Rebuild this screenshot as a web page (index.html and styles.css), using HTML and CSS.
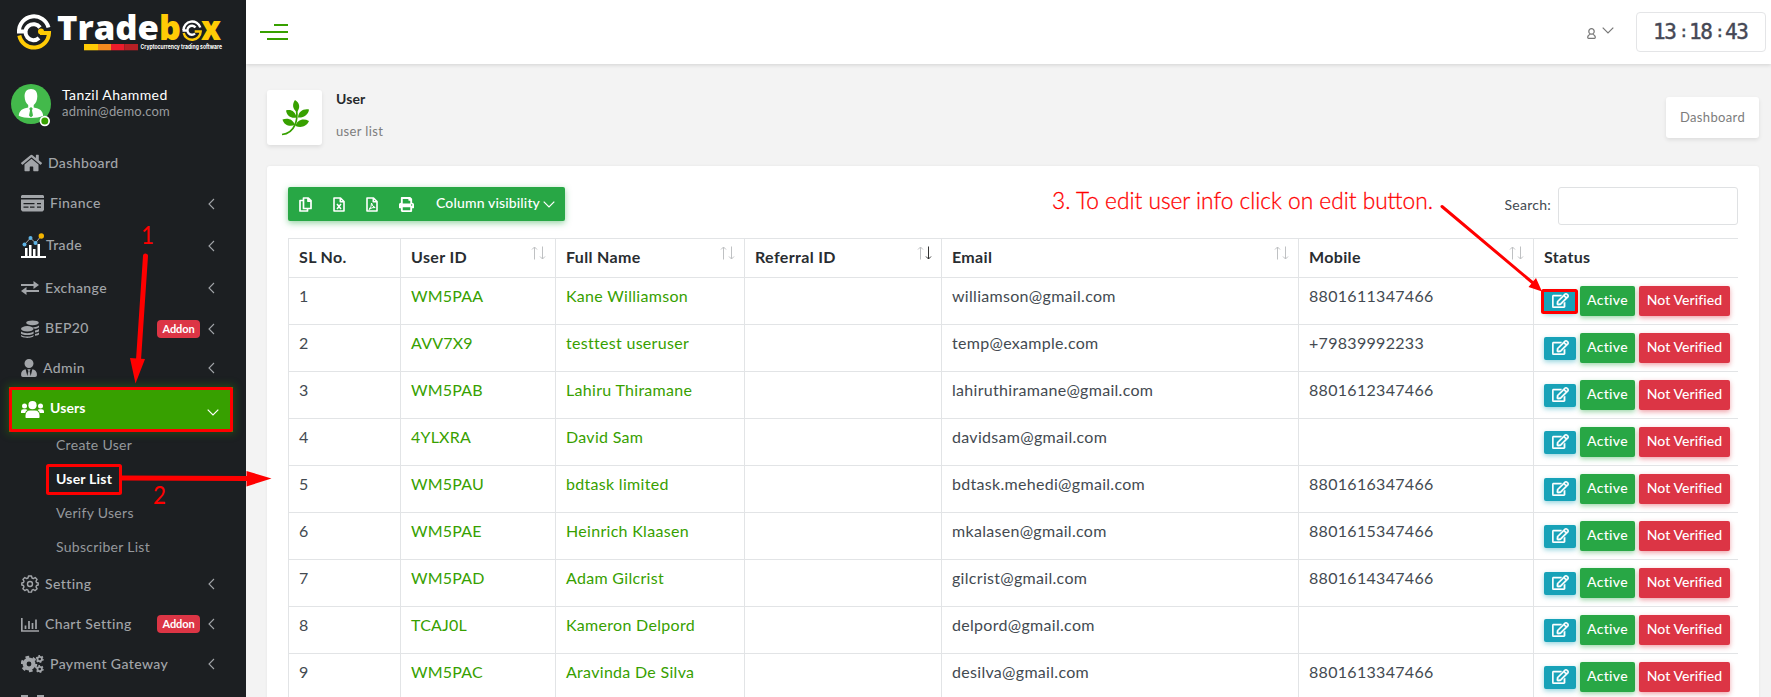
FILE: index.html
```html
<!DOCTYPE html>
<html lang="en">
<head>
<meta charset="utf-8">
<title>User list</title>
<link rel="stylesheet" href="styles.css">
</head>
<body>
<svg class="defs" width="0" height="0">
  <symbol id="edit" viewBox="0 0 576 512"><path fill="currentColor" stroke="currentColor" stroke-width="14" d="M402.3 344.9l32-32c5-5 13.7-1.5 13.7 5.7V464c0 26.5-21.5 48-48 48H48c-26.5 0-48-21.5-48-48V112c0-26.5 21.5-48 48-48h273.5c7.1 0 10.7 8.6 5.7 13.7l-32 32c-1.5 1.5-3.5 2.3-5.7 2.3H48v352h352V350.5c0-2.1.8-4.1 2.3-5.6zm156.6-201.8L296.3 405.7l-90.4 10c-26.2 2.9-48.5-19.2-45.6-45.6l10-90.4L432.9 17.1c22.9-22.9 59.9-22.9 82.7 0l43.2 43.2c22.9 22.9 22.9 60 .1 82.8zM460.1 174L402 115.9 216.2 301.8l-7.3 65.3 65.3-7.3L460.1 174zm64.8-79.7l-43.2-43.2c-4.1-4.1-10.8-4.1-14.8 0L436 82l58.1 58.1 30.9-30.9c4-4.2 4-10.8-.1-14.9z"/></symbol>
  <symbol id="left" viewBox="0 0 7 12"><path d="M6 1 1 6l5 5" fill="none" stroke="currentColor" stroke-width="1.1"/></symbol>
  <symbol id="down" viewBox="0 0 12 7"><path d="M.7.7 6 6 11.300.7" fill="none" stroke="currentColor" stroke-width="1.2"/></symbol>
  <symbol id="up-arrow" viewBox="0 0 7 14"><path d="M3.500 1v12.500M1 3.500l2.500-2.500 2.500 2.500" fill="none" stroke="currentColor"/></symbol>
  <symbol id="down-arrow" viewBox="0 0 7 14"><path d="M3.500.5v12.500M1 10.500l2.500 2.500 2.500-2.500" fill="none" stroke="currentColor"/></symbol>
</svg>

<div class="app">
  <aside class="sidebar">
    <svg class="logo" width="246" height="64" viewBox="0 0 246 64">
      <g fill="none" stroke-width="4">
        <path d="M19 31.500a15 15 0 0 1 29.500-4" stroke="#fff"/>
        <path d="M19.300 35.500a15 15 0 0 0 29.700-2.500h-9" stroke="#ffcb05"/>
        <path d="M40 27.500a8 8 0 1 0-1 10.500M17 31.500h8" stroke="#fff"/>
      </g>
      <circle cx="41" cy="31.500" r="3" fill="#ffcb05"/>
      <text class="brand" x="57" y="40" textLength="102" lengthAdjust="spacingAndGlyphs" fill="#fff">Trade</text>
      <text class="brand" x="159" y="40" textLength="22" lengthAdjust="spacingAndGlyphs" fill="#ffcb05">b</text>
      <text class="brand" x="201" y="40" textLength="20" lengthAdjust="spacingAndGlyphs" fill="#ffcb05">x</text>
      <g fill="none" stroke-width="2.400">
        <path d="M183.500 30a8.600 8.600 0 0 1 16.800-2.500" stroke="#fff"/>
        <path d="M183.700 33a8.600 8.600 0 0 0 17-1.500h-6" stroke="#ffcb05"/>
        <path d="M195.500 27.500a4.500 4.500 0 1 0-.5 6M182.500 30.500h5" stroke="#fff"/>
      </g>
      <path fill="#ffcb05" d="M84 44h14v6.300H84z"/><path fill="#f58b1f" d="M98 44h13v6.300H98z"/><path fill="#ec1c2b" d="M111 44h13.500v6.300H111z"/><path fill="#b92025" d="M124.500 44h13.500v6.300h-13.500z"/>
      <text class="tagline" x="140.500" y="49" textLength="81.500" lengthAdjust="spacingAndGlyphs">Cryptocurrency trading software</text>
    </svg>

    <div class="profile">
      <svg width="42" height="44" viewBox="0 0 42 44">
        <circle cx="20" cy="20" r="20" fill="#43b94b"/>
        <path fill="#fff" d="M20 5c4.500 0 6.500 3 6.300 7.500-.1 4-1.500 7-3.600 8.500v2.500c6 1.200 9 3 9.500 8.200-6 3-18.500 3-24.500 0 .5-5.200 3.500-7 9.500-8.200V21c-2-1.500-3.500-4.500-3.600-8.500C13.500 8 15.500 5 20 5z"/>
        <path fill="#43b94b" d="m18.300 24.500 1.700-1.500 1.700 1.500-.7 2 1 5-2 2-2-2 1-5z"/>
        <circle cx="33.800" cy="37" r="5.200" fill="#fff"/><circle cx="33.800" cy="37" r="3.500" fill="#37a000"/>
      </svg>
      <div><div class="name">Tanzil Ahammed</div><div class="mail">admin@demo.com</div></div>
    </div>

    <nav class="menu">
      <a class="item dash"><svg width="21" height="18" viewBox="0 20 576 472"><path fill="currentColor" d="M280.37 148.26L96 300.11V464a16 16 0 0 0 16 16l112.060-.29a16 16 0 0 0 15.920-16V368a16 16 0 0 1 16-16h64a16 16 0 0 1 16 16v95.640a16 16 0 0 0 16 16.050L464 480a16 16 0 0 0 16-16V300L295.670 148.260a12.190 12.190 0 0 0-15.300 0zM571.600 251.470L488 182.560V44.050a12 12 0 0 0-12-12h-56a12 12 0 0 0-12 12v72.610L318.470 43a48 48 0 0 0-61 0L4.340 251.470a12 12 0 0 0-1.600 16.900l25.500 31A12 12 0 0 0 45.150 301l235.220-193.740a12.190 12.190 0 0 1 15.300 0L530.900 301a12 12 0 0 0 16.900-1.600l25.500-31a12 12 0 0 0-1.700-16.930z"/></svg><span>Dashboard</span></a>
      <a class="item fin"><svg width="23" height="17" viewBox="0 0 23 17"><path fill="currentColor" fill-rule="evenodd" d="M1 0h21l1 1v2H0V1zM0 4.500h23V15l-1.500 1.500h-20L0 15zM2.500 8v1.300h11V8zm0 3.500v1.300h5v-1.300zm6.500 0v1.300h4.500v-1.300zm7-3.500v1.300h4V8zm0 3.500v1.300h4v-1.300z"/></svg><span>Finance</span><svg class="chev"><use href="#left"/></svg></a>
      <a class="item trade"><svg width="25" height="25" viewBox="0 0 25 25"><path fill="#fff" d="M0 23h25v2H0zM4 15h2.500v8H4zm4-3h2.500v11H8zm4 4h2.500v7H12zm4.500-5H19v12h-2.500z"/><path d="M3.500 11.500 9.500 5l5 5 5.500-7" fill="none" stroke="#aaa"/><g fill="#5fb4e5"><circle cx="3.500" cy="11.500" r="2"/><circle cx="9.500" cy="5" r="2"/><circle cx="14.500" cy="10" r="2"/></g><circle cx="20.300" cy="3" r="2.700" fill="#f4b400"/></svg><span>Trade</span><svg class="chev"><use href="#left"/></svg></a>
      <a class="item exch"><svg width="18" height="14" viewBox="0 0 18 14"><path fill="currentColor" d="M0 3h12.500V0L18 4l-5.500 4V5H0zM18 9H5.500V6L0 10l5.500 4v-3H18z"/></svg><span>Exchange</span><svg class="chev"><use href="#left"/></svg></a>
      <a class="item bep"><svg width="18" height="18" viewBox="0 0 18 18"><g fill="currentColor"><ellipse cx="11.500" cy="2.800" rx="6.300" ry="2.400"/><path d="M18 5.500c-2 1.700-4 1.700-6 1.600l1.500 1.700c2 0 4-.7 4.500-1.500zM18 9c-1 .8-2.500 1.200-4 1.400v2c2 0 4-.8 4-1.500zM18 12.500c-1 .8-2.500 1.200-4 1.400v1.800c2 0 4-.8 4-1.500z"/><ellipse cx="6.300" cy="8.800" rx="6.300" ry="2.700"/><path d="M0 11.500c3 2.200 9.500 2.200 12.600 0v1.700c0 2.400-12.600 2.400-12.600 0zM0 15c3 2 9.500 2 12.600 0v.8c0 2.800-12.600 2.800-12.600 0z"/></g></svg><span>BEP20</span><b class="badge">Addon</b><svg class="chev"><use href="#left"/></svg></a>
      <a class="item admin"><svg width="16" height="18" viewBox="0 0 448 512"><path fill="currentColor" d="M224 256c70.700 0 128-57.300 128-128S294.700 0 224 0 96 57.300 96 128s57.300 128 128 128zm95.800 32.600L272 480l-32-136 32-56h-96l32 56-32 136-47.800-191.400C56.900 292 0 350.300 0 422.400V464c0 26.500 21.500 48 48 48h352c26.500 0 48-21.500 48-48v-41.600c0-72.100-56.900-130.400-128.200-133.800z"/></svg><span>Admin</span><svg class="chev"><use href="#left"/></svg></a>
      <a class="item users"><svg width="23" height="17" viewBox="0 0 23 17"><g fill="currentColor"><circle cx="3.500" cy="5" r="2.500"/><circle cx="19.500" cy="5" r="2.500"/><circle cx="11.500" cy="4.200" r="4.100"/><path d="M0 12V10.500Q0 8.300 2.300 8.300H5l1.500.7Q4.500 10 4.200 12zM23 12v-1.500q0-2.200-2.300-2.200H18l-1.500.7q2 1 2.300 3zM5 17q-.5-.2-.5-1v-1.500C4.500 11.500 6 9.500 9 9.500h5c3 0 4.500 2 4.500 5V16q0 .8-.5 1z"/></g></svg><span>Users</span><svg class="open"><use href="#down"/></svg></a>
      <div class="submenu"><a>Create User</a><a class="current">User List</a><a>Verify Users</a><a>Subscriber List</a></div>
      <a class="item sett"><svg width="18" height="18" viewBox="0 0 18 18"><g fill="none" stroke="currentColor" stroke-width="1.400"><path stroke-linejoin="round" d="m7.500 1-.5 2-1.400.6-1.800-1.100-1.900 1.900 1.100 1.800L2.500 7.500.8 8v2l1.700.5.5 1.400-1.100 1.800 1.900 1.900 1.800-1.100 1.400.6.500 2h3l.5-2 1.400-.6 1.800 1.100 1.900-1.900-1.100-1.800.5-1.400 1.700-.5V8l-1.700-.5-.5-1.300 1.100-1.800-1.900-1.900-1.800 1.100L11 3l-.5-2z"/><circle cx="9" cy="9" r="2.500"/></g></svg><span>Setting</span><svg class="chev"><use href="#left"/></svg></a>
      <a class="item chart"><svg width="18" height="15" viewBox="0 0 18 15"><path d="M.8 1v13H18M4.500 12V8.500M8 12V4M11.500 12V6M15 12V2.500" fill="none" stroke="currentColor" stroke-width="1.700"/></svg><span>Chart Setting</span><b class="badge">Addon</b><svg class="chev"><use href="#left"/></svg></a>
      <a class="item pay"><svg width="23" height="18" viewBox="0 0 23 18"><g fill="none" stroke="currentColor"><circle cx="8" cy="9" r="4.400" stroke-width="4"/><circle cx="8" cy="9" r="7" stroke-width="2.500" stroke-dasharray="3.660 3.660"/><circle cx="18.700" cy="4" r="2.200" stroke-width="1.800"/><circle cx="18.700" cy="4" r="3.300" stroke-width="1.400" stroke-dasharray="1.700 1.750"/><circle cx="18.700" cy="14" r="2.200" stroke-width="1.800"/><circle cx="18.700" cy="14" r="3.300" stroke-width="1.400" stroke-dasharray="1.700 1.750"/></g></svg><span>Payment Gateway</span><svg class="chev"><use href="#left"/></svg></a>
      <a class="item last"><svg width="23" height="18" viewBox="0 0 23 18"><path fill="currentColor" d="M0 0h7v7H0zM16 0h7v7h-7z"/></svg></a>
    </nav>
  </aside>

  <main class="main">
    <header class="topbar">
      <div class="burger"><i></i><i></i><i></i></div>
      <div class="account">
        <svg width="9" height="11" viewBox="0 0 9 11"><g fill="none" stroke="#777" stroke-width="1.200"><ellipse cx="4.500" cy="3.400" rx="2.700" ry="2.800"/><path d="M3.300 6.200C1 7 .7 8 .7 9.500q0 .8.8.8h6q.8 0 .8-.8c0-1.500-.3-2.500-2.600-3.300"/></g></svg>
        <svg class="caret" width="12" height="7"><use href="#down"/></svg>
      </div>
      <div class="clock"><span>13</span><em>:</em><span>18</span><em>:</em><span>43</span></div>
    </header>

    <section class="heading">
      <div class="leaf"><svg width="28" height="36" viewBox="0 0 28 36"><g fill="#37a000"><path d="M14 0c5 3 5.500 8 2 12-4.500-3-5-8-2-12zM5 10.500c5-1.500 9.500 1 10.500 7-5 1-9.500-1-10.500-7zM28 9.500c-.5 5-5 8.500-11 8 .5-6 5-9 11-8zM1.500 19.500C6.500 17.500 12 19 14 25c-5 2-11 .5-12.500-5.500zM28 21c-2 5-7.500 7.500-13.500 5C16 20 22 18 28 21z"/></g><path d="M15.500 10c1.500 9-1 23-14.500 24.500" fill="none" stroke="#37a000" stroke-width="1.700"/></svg></div>
      <div class="titles"><h1>User</h1><p>user list</p></div>
      <a class="crumb">Dashboard</a>
    </section>

    <section class="card">
      <div class="tools">
        <div class="buttons">
          <svg width="13" height="15" viewBox="0 0 13 15"><path d="M4.500 3.500H1V14h7.500v-2.500M4.500 1h4.800L12 3.700v7.800H4.500zM9 1v3.200h3" fill="none" stroke="currentColor" stroke-width="1.700" stroke-linejoin="round"/></svg>
          <svg width="12" height="15" viewBox="0 0 12 15"><path d="M1 1h6.500L11 4.500V14H1zM7.300 1v3.700H11" fill="none" stroke="currentColor" stroke-width="1.600" stroke-linejoin="round"/><path d="m4 7 4 5M8 7l-4 5" stroke="currentColor" stroke-width="1.500"/></svg>
          <svg width="12" height="15" viewBox="0 0 12 15"><path d="M1 1h6.500L11 4.500V14H1zM7.300 1v3.700H11" fill="none" stroke="currentColor" stroke-width="1.600" stroke-linejoin="round"/><path d="M3 12.500q2.800-3 2.500-6.500 1 4 3.700 4.500-3.200-.5-6.200 2" fill="none" stroke="currentColor"/></svg>
          <svg width="15" height="15" viewBox="0 0 512 512"><path fill="currentColor" d="M448 192V77.250c0-8.490-3.370-16.620-9.370-22.630L393.370 9.370c-6-6-14.140-9.370-22.630-9.370H96C78.330 0 64 14.330 64 32v160c-35.350 0-64 28.650-64 64v112c0 8.840 7.160 16 16 16h48v96c0 17.670 14.330 32 32 32h320c17.670 0 32-14.330 32-32v-96h48c8.840 0 16-7.160 16-16V256c0-35.350-28.650-64-64-64zm-64 256H128v-96h256v96zm0-224H128V64h192v48c0 8.840 7.160 16 16 16h48v96zm48 72c-13.250 0-24-10.750-24-24 0-13.260 10.750-24 24-24s24 10.740 24 24c0 13.250-10.750 24-24 24z"/></svg>
          <span>Column visibility</span>
          <svg class="caret" width="12" height="7"><use href="#down"/></svg>
        </div>
        <label class="search"><span>Search:</span><input type="text"></label>
      </div>

      <div class="scroll">
        <table>
          <colgroup><col class="c1"><col class="c2"><col class="c3"><col class="c4"><col class="c5"><col class="c6"><col class="c7"></colgroup>
          <thead><tr>
            <th>SL No.</th>
            <th><div><span>User ID</span><i class="sort"><svg><use href="#up-arrow"/></svg><svg><use href="#down-arrow"/></svg></i></div></th>
            <th><div><span>Full Name</span><i class="sort"><svg><use href="#up-arrow"/></svg><svg><use href="#down-arrow"/></svg></i></div></th>
            <th><div><span>Referral ID</span><i class="sort desc"><svg><use href="#up-arrow"/></svg><svg><use href="#down-arrow"/></svg></i></div></th>
            <th><div><span>Email</span><i class="sort"><svg><use href="#up-arrow"/></svg><svg><use href="#down-arrow"/></svg></i></div></th>
            <th><div><span>Mobile</span><i class="sort"><svg><use href="#up-arrow"/></svg><svg><use href="#down-arrow"/></svg></i></div></th>
            <th><div><span>Status</span><i class="sort"><svg><use href="#up-arrow"/></svg><svg><use href="#down-arrow"/></svg></i></div></th>
          </tr></thead>
          <tbody>
            <tr><td>1</td><td class="id">WM5PAA</td><td class="full">Kane Williamson</td><td></td><td class="email">williamson@gmail.com</td><td class="phone">8801611347466</td><td><div class="acts"><a class="edit"><svg><use href="#edit"/></svg></a><a class="ok">Active</a><a class="no">Not Verified</a></div></td></tr>
            <tr><td>2</td><td class="id">AVV7X9</td><td class="full">testtest useruser</td><td></td><td class="email">temp@example.com</td><td class="phone">+79839992233</td><td><div class="acts"><a class="edit"><svg><use href="#edit"/></svg></a><a class="ok">Active</a><a class="no">Not Verified</a></div></td></tr>
            <tr><td>3</td><td class="id">WM5PAB</td><td class="full">Lahiru Thiramane</td><td></td><td class="email">lahiruthiramane@gmail.com</td><td class="phone">8801612347466</td><td><div class="acts"><a class="edit"><svg><use href="#edit"/></svg></a><a class="ok">Active</a><a class="no">Not Verified</a></div></td></tr>
            <tr><td>4</td><td class="id">4YLXRA</td><td class="full">David Sam</td><td></td><td class="email">davidsam@gmail.com</td><td class="phone"></td><td><div class="acts"><a class="edit"><svg><use href="#edit"/></svg></a><a class="ok">Active</a><a class="no">Not Verified</a></div></td></tr>
            <tr><td>5</td><td class="id">WM5PAU</td><td class="full">bdtask limited</td><td></td><td class="email">bdtask.mehedi@gmail.com</td><td class="phone">8801616347466</td><td><div class="acts"><a class="edit"><svg><use href="#edit"/></svg></a><a class="ok">Active</a><a class="no">Not Verified</a></div></td></tr>
            <tr><td>6</td><td class="id">WM5PAE</td><td class="full">Heinrich Klaasen</td><td></td><td class="email">mkalasen@gmail.com</td><td class="phone">8801615347466</td><td><div class="acts"><a class="edit"><svg><use href="#edit"/></svg></a><a class="ok">Active</a><a class="no">Not Verified</a></div></td></tr>
            <tr><td>7</td><td class="id">WM5PAD</td><td class="full">Adam Gilcrist</td><td></td><td class="email">gilcrist@gmail.com</td><td class="phone">8801614347466</td><td><div class="acts"><a class="edit"><svg><use href="#edit"/></svg></a><a class="ok">Active</a><a class="no">Not Verified</a></div></td></tr>
            <tr><td>8</td><td class="id">TCAJ0L</td><td class="full">Kameron Delpord</td><td></td><td class="email">delpord@gmail.com</td><td class="phone"></td><td><div class="acts"><a class="edit"><svg><use href="#edit"/></svg></a><a class="ok">Active</a><a class="no">Not Verified</a></div></td></tr>
            <tr><td>9</td><td class="id">WM5PAC</td><td class="full">Aravinda De Silva</td><td></td><td class="email">desilva@gmail.com</td><td class="phone">8801613347466</td><td><div class="acts"><a class="edit"><svg><use href="#edit"/></svg></a><a class="ok">Active</a><a class="no">Not Verified</a></div></td></tr>
          </tbody>
        </table>
      </div>
    </section>
  </main>
</div>

<svg class="notes" width="1771" height="697" viewBox="0 0 1771 697">
  <g fill="none" stroke="#f00">
    <rect x="10.500" y="388.500" width="221" height="42" rx="1" stroke-width="3"/>
    <rect x="47.500" y="465.500" width="73" height="28" rx="1" stroke-width="3"/>
    <rect x="1542.500" y="290.500" width="34" height="22" rx="1" stroke-width="3"/>
    <path d="M145.500 256 138.500 360M122 478l125 .5" stroke-width="5" stroke-linecap="round"/>
    <path d="M1442 206.500 1533 283" stroke-width="3" stroke-linecap="round"/>
  </g>
  <path fill="#f00" d="m130 358 15 1-9.500 24.500zM246.500 471l25 7.500-25 8zM1536 278l6 13.500-13.500-4.500z"/>
  <text x="141" y="244" font-size="25" textLength="13" lengthAdjust="spacingAndGlyphs">1</text>
  <text x="153" y="504" font-size="25" textLength="13" lengthAdjust="spacingAndGlyphs">2</text>
  <text class="light" x="1052" y="208.500" font-size="23.500" textLength="381" lengthAdjust="spacingAndGlyphs">3. To edit user info click on edit button.</text>
</svg>
</body>
</html>
```
FILE: styles.css
```css
* { box-sizing: border-box; }
body { margin: 0; width: 1771px; height: 697px; overflow: hidden; background: #f3f3f3; color: #434a51; font: 16px/24px Lato, "Noto Sans", sans-serif; position: relative; }
svg { display: block; flex: none; }
.defs { position: absolute; }
.app { display: flex; height: 697px; }

.sidebar { width: 246px; flex: none; height: 697px; overflow: hidden; background: #1c1f22; color: #a2a5a9; }
.brand { font: 800 34px "Open Sans", sans-serif; }
.tagline { font: 700 6px Inter, sans-serif; fill: #fff; }
.profile { display: flex; gap: 9px; padding: 20px 0 0 11px; height: 79px; }
.profile svg { width: 42px; }
.profile > div { padding-top: 3px; line-height: 16px; font-size: 14px; }
.name { color: #fff; letter-spacing: .4px; }
.mail { font-size: 13px; letter-spacing: .2px; color: #999c9f; line-height: 17px; }
.menu { display: flex; flex-direction: column; font-size: 14px; }
.item { display: flex; align-items: center; height: 40px; padding-left: 21px; letter-spacing: .4px; flex: none; font-weight: 500; }
.item span { margin-left: 6px; line-height: 20px; padding-bottom: 1px; }
.item .chev { width: 7px; height: 12px; margin: 0 31px 0 auto; }
.item .badge + .chev { margin-left: 8px; }
.badge { margin-left: auto; width: 43px; height: 18px; border-radius: 4px; background: #dc3545; color: #fff; font: 700 11px/17px Lato, sans-serif; text-align: center; letter-spacing: -.1px; }
.fin { height: 41px; }
.trade { height: 43px; }
.trade span { margin-left: 0; }
.exch { height: 42px; }
.bep { height: 39px; }
.item.users { height: 45px; margin: -1px 13px 0 9px; padding-left: 12px; background: #37a000; color: #fff; box-shadow: 0 0 8px 2px rgba(55,160,0,.3); font-weight: 700; letter-spacing: .1px; }
.item.users .open { width: 12px; height: 7px; margin: 5px 14px 0 auto; }
.users span { padding-bottom: 3px; }
.submenu { display: flex; flex-direction: column; padding-left: 56px; margin-top: -4px; }
.submenu a { height: 34px; line-height: 33px; letter-spacing: .3px; color: #95989c; flex: none; }
.submenu .current { color: #fff; font-weight: 700; letter-spacing: .2px; }

.main { flex: 1; min-width: 0; }
.topbar { height: 64px; background: #fff; display: flex; align-items: center; padding: 0 5px 0 14px; box-shadow: 0 1px 4px rgba(0,0,0,.14); }
.burger { display: flex; flex-direction: column; align-items: flex-end; gap: 5px; width: 28px; }
.burger i { height: 2px; width: 28px; background: #37a000; }
.burger i:first-child { width: 14px; }
.burger i:last-child { width: 21px; }
.account { margin-left: auto; display: flex; gap: 6px; color: #777; padding-top: 3px; }
.account .caret { margin-top: -1px; }
.clock { margin-left: 22px; width: 130px; height: 40px; border: 1px solid #e4e5e7; border-radius: 4px; display: flex; align-items: center; justify-content: center; gap: 4px; color: #464855; font: 400 21px/36px "DejaVu Sans Mono", monospace; -webkit-text-stroke: .4px #464855; }
.clock span { width: 24px; letter-spacing: -1.300px; }
.clock em { width: 6px; font-style: normal; font-size: 16px; margin-left: -2px; }

.heading { display: flex; padding: 26px 12px 0 21px; height: 102px; font-size: 14px; }
.leaf { width: 55px; height: 55px; border-radius: 3px; background: #fff; display: grid; place-items: center; box-shadow: 0 2px 4px rgba(0,0,0,.09); }
.titles { padding-left: 14px; }
h1 { margin: 0; font-size: 14px; line-height: 18px; font-weight: 700; color: #26292c; letter-spacing: .1px; }
.titles p { margin: 14px 0 0; line-height: 18px; font-size: 13px; color: #7d7d7d; letter-spacing: .35px; }
.crumb { margin: 7px 0 0 auto; width: 93px; height: 41px; line-height: 40px; background: #fff; border-radius: 3px; text-align: center; font-size: 13px; letter-spacing: .35px; color: #7c7c7c; box-shadow: 0 2px 4px rgba(0,0,0,.09); }

.card { margin: 0 12px 0 21px; height: 560px; padding: 21px; background: #fff; border-radius: 3px; box-shadow: 0 0 3px rgba(0,0,0,.06); }
.tools { display: flex; justify-content: space-between; height: 51px; }
.buttons { display: flex; align-items: center; gap: 21px; width: 277px; height: 34px; padding-left: 11px; border-radius: 2px; background: #28a745; color: #fff; font-size: 14px; box-shadow: 0 2px 6px rgba(40,167,69,.5); }
.buttons span { margin: -2px -19px 0 1px; white-space: nowrap; width: 105px; font-weight: 500; letter-spacing: .15px; }
.search { display: flex; gap: 7px; font-size: 14px; line-height: 36px; letter-spacing: .25px; }
.search input { width: 180px; height: 38px; border: 1px solid #dfe1e3; border-radius: 3px; background: #fff; }

.scroll { width: 1450px; height: 459px; overflow: hidden; }
table { border-collapse: collapse; table-layout: fixed; width: 1475px; }
.c1 { width: 112px; }
.c2 { width: 155px; }
.c3 { width: 189px; }
.c4 { width: 197px; }
.c5 { width: 357px; }
.c6 { width: 235px; }
.c7 { width: 230px; }
th, td { border: 1px solid #e2e4e6; padding: 8px 10px; text-align: left; vertical-align: top; white-space: nowrap; }
th { height: 39px; padding: 6px 10px; color: #292d31; font-weight: 700; letter-spacing: .35px; }
th > div { display: flex; justify-content: space-between; }
td { height: 47px; padding-top: 6px; padding-bottom: 6px; }
.sort { display: flex; gap: 1px; color: #bfc1c3; margin: 1px -1px 0 0; }
.sort svg { width: 7px; height: 14px; }
.desc svg:last-child { color: #333; }
.id, .full { color: #37a000; }
.id { letter-spacing: .2px; }
.full { letter-spacing: .3px; }
.email, .phone { letter-spacing: .3px; }
.acts { display: flex; align-items: center; gap: 4px; padding-top: 2px; color: #fff; font-size: 14px; line-height: 28px; font-weight: 500; }
.acts a { height: 30px; border-radius: 2px; text-align: center; }
.acts .edit { width: 32px; height: 23px; background: #17a2b8; display: grid; place-items: center; box-shadow: 0 2px 5px rgba(23,162,184,.45); }
.edit svg { width: 17px; height: 15px; margin-top: -1px; overflow: visible; }
.acts .ok { width: 55px; background: #28a745; box-shadow: 0 2px 5px rgba(40,167,69,.45); letter-spacing: .3px; }
.acts .no { width: 91px; background: #dc3545; box-shadow: 0 2px 5px rgba(220,53,69,.45); letter-spacing: .1px; }

.notes { position: absolute; left: 0; top: 0; font-family: Lato, sans-serif; }
.notes text { fill: #f00; }
.notes .light { font-weight: 300; stroke: #f00; stroke-width: .3px; }
```
